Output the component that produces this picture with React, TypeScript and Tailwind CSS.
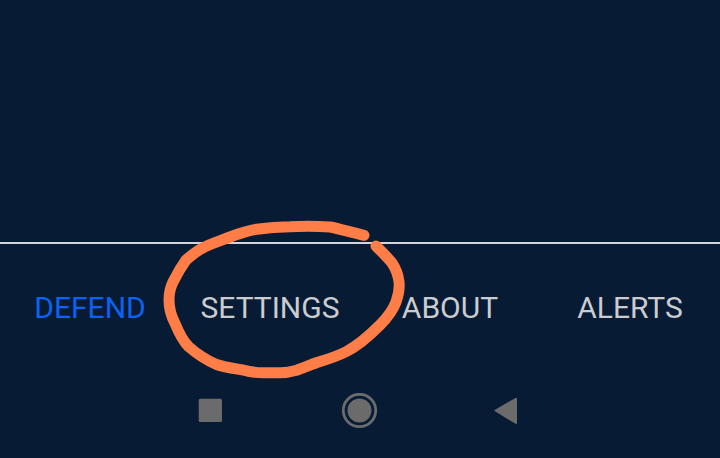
const tabs = [
  { label: "DEFEND", active: true },
  { label: "SETTINGS" },
  { label: "ABOUT" },
  { label: "ALERTS" },
];

function TabBar() {
  return (
    <nav className="grid h-[121px] grid-cols-4 items-center border-t-2 border-[#d3d5da] pt-2 text-center text-[30px] leading-none">
      {tabs.map((tab) => (
        <button key={tab.label} className={tab.active ? "text-[#0a63f2]" : "text-[#cbccd0]"}>
          {tab.label}
        </button>
      ))}
    </nav>
  );
}

function SystemBar() {
  return (
    <div className="flex h-[95px] items-start justify-center bg-[#071b35] pt-[30px] text-[#6b6b6b]">
      <svg className="h-9 w-[324px]" viewBox="198 393 324 36" fill="currentColor">
        <rect x="198.7" y="398.7" width="23.3" height="23.3" rx="1.5" />
        <circle cx="359.5" cy="410.5" r="16.2" fill="none" stroke="currentColor" strokeWidth="2.8" />
        <circle cx="359.5" cy="410.5" r="12" />
        <path d="M495.5 410.5 L516 398.8 V423 Z" stroke="currentColor" strokeWidth="2" strokeLinejoin="round" />
      </svg>
    </div>
  );
}

function Highlight() {
  return (
    <svg
      className="pointer-events-none absolute left-0 top-0 h-[458px] w-[720px]"
      viewBox="0 0 720 458"
      fill="none"
      stroke="#ff7d47"
      strokeWidth="11"
      strokeLinecap="round"
      strokeLinejoin="round"
    >
      <path d="M364 235.3 C352 232.500 338 228.500 330 227 C318 226.300 300 226.300 290 226.700 C278 226.700 268 227.500 256.700 229.300 C246 231 238 234 230 237 C220 241 211 243.500 202 248.300 C195 252 191 256 186 260 C181 267 177 274 173 282 C169.500 289 169 294 169 300 C169 309 171 316 175.300 324 C179 333 183 341 188.500 346.500 C197 354 206 360 216.500 364.500 C225 367.500 234 368.500 243 370 C250 372 256 372.700 263 372.700 H280 C286 372.700 291 371.800 296.700 370.200 C303 368 310 365 317 362.500 C327 359.500 337 356.500 346.500 351.500 C359 345 370 335 380 325 C388 317 393 310 396 302 C398.500 295 399.700 288 399 281.700 C398 274 395.500 268 391.700 262.500 C387 257 382 252 376 246" />
    </svg>
  );
}

export default function App() {
  return (
    <main className="relative flex h-[458px] w-[720px] flex-col overflow-hidden bg-[#071b34] font-['Roboto',sans-serif]">
      <section className="flex-1" />
      <TabBar />
      <SystemBar />
      <Highlight />
    </main>
  );
}
